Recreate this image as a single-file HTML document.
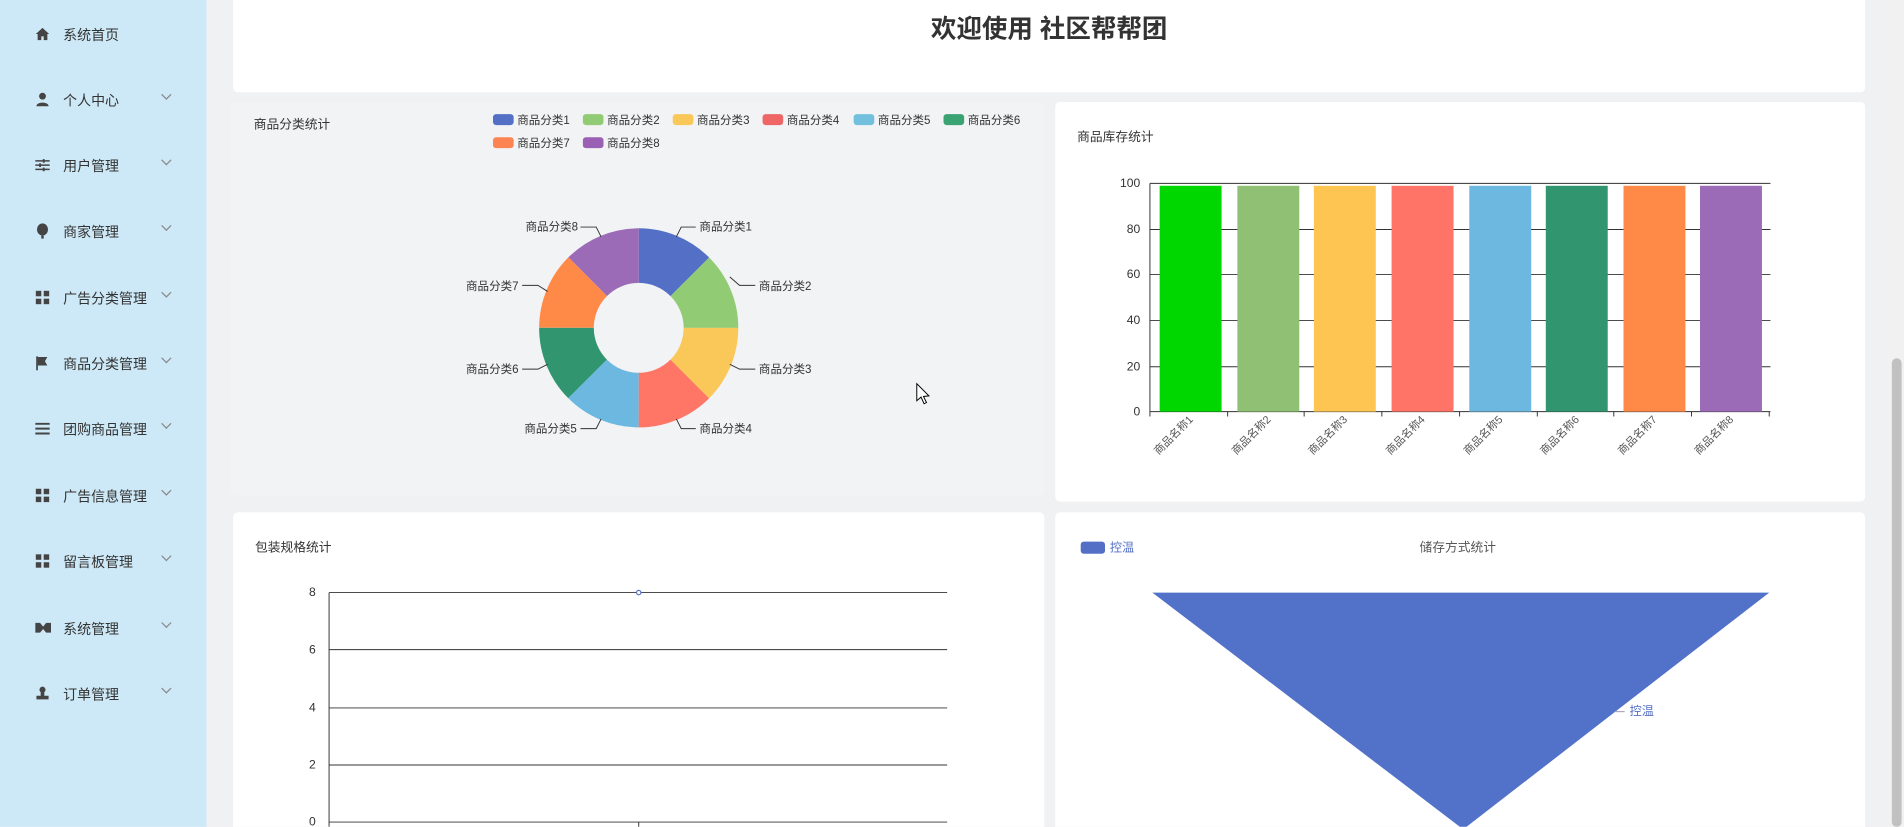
<!DOCTYPE html>
<html><head><meta charset="utf-8"><style>
*{margin:0;padding:0;box-sizing:border-box}
html,body{width:1904px;height:827px;overflow:hidden;background:#f0f1f3;font-family:"Liberation Sans","Noto Sans CJK SC",sans-serif}
#w{position:absolute;left:0;top:0;width:1568px;height:681px;overflow:hidden;transform:scale(1.21429);transform-origin:0 0;background:#f0f1f3}
.side{position:absolute;left:0;top:0;width:170px;height:681px;background:#cde8f6}
.it{position:absolute;left:0;width:170px;height:20px;font-size:11.5px;color:#333}
.it svg{position:absolute;left:29px;top:3px}
.it span{position:absolute;left:52px;top:2px}
.it i{position:absolute;left:134px;top:2px;width:6px;height:6px;border-right:1px solid #888;border-bottom:1px solid #888;transform:rotate(45deg)}
.card{position:absolute;background:#fff;border-radius:4px}
.t{position:absolute;font-size:10.5px;color:#333}
.sb{position:absolute;left:1555px;top:0;width:13px;height:681px;background:#f1f1f1}
.sb div{position:absolute;left:3px;top:295px;width:8px;height:386px;background:#c1c1c1;border-radius:4px}
svg text{font-family:"Liberation Sans","Noto Sans CJK SC",sans-serif}
</style></head><body><div id="w">
<div class="side">
<div class="it" style="top:19px"><svg width="12" height="12" viewBox="0 0 12 12"><path d="M6 1L0.5 6H2V11H5V8H7V11H10V6H11.5Z" fill="#444"/></svg><span>系统首页</span></div>
<div class="it" style="top:73px"><svg width="12" height="12" viewBox="0 0 12 12"><circle cx="6" cy="3.2" r="2.8" fill="#444"/><path d="M1 11.5C1 7.5 11 7.5 11 11.5Z" fill="#444"/></svg><span>个人中心</span><i></i></div>
<div class="it" style="top:127px"><svg width="12" height="12" viewBox="0 0 12 12"><path d="M0 2.5H12M0 6H12M0 9.5H12" stroke="#444" stroke-width="1.2"/><path d="M7 1V4M4 4.5V7.5M7 8V11" stroke="#444" stroke-width="1.6"/></svg><span>用户管理</span><i></i></div>
<div class="it" style="top:181px"><svg width="12" height="13" viewBox="0 0 12 13"><ellipse cx="6" cy="5" rx="4.5" ry="5" fill="#444"/><rect x="5" y="10" width="2" height="2.5" fill="#444"/></svg><span>商家管理</span><i></i></div>
<div class="it" style="top:236px"><svg width="12" height="12" viewBox="0 0 12 12"><rect x="0.5" y="0.5" width="4.5" height="4.5" fill="#444"/><rect x="7" y="0.5" width="4.5" height="4.5" fill="#444"/><rect x="0.5" y="7" width="4.5" height="4.5" fill="#444"/><rect x="7" y="7" width="4.5" height="4.5" fill="#444"/></svg><span>广告分类管理</span><i></i></div>
<div class="it" style="top:290px"><svg width="12" height="12" viewBox="0 0 12 12"><path d="M1.5 0.5V12" stroke="#444" stroke-width="1.4"/><path d="M2 1H10L8 4.5L10 8H2Z" fill="#444"/></svg><span>商品分类管理</span><i></i></div>
<div class="it" style="top:344px"><svg width="12" height="12" viewBox="0 0 12 12"><path d="M0 2H12M0 6H12M0 10H12" stroke="#444" stroke-width="1.6"/></svg><span>团购商品管理</span><i></i></div>
<div class="it" style="top:399px"><svg width="12" height="12" viewBox="0 0 12 12"><rect x="0.5" y="0.5" width="4.5" height="4.5" fill="#444"/><rect x="7" y="0.5" width="4.5" height="4.5" fill="#444"/><rect x="0.5" y="7" width="4.5" height="4.5" fill="#444"/><rect x="7" y="7" width="4.5" height="4.5" fill="#444"/></svg><span>广告信息管理</span><i></i></div>
<div class="it" style="top:453px"><svg width="12" height="12" viewBox="0 0 12 12"><rect x="0.5" y="0.5" width="4.5" height="4.5" fill="#444"/><rect x="7" y="0.5" width="4.5" height="4.5" fill="#444"/><rect x="0.5" y="7" width="4.5" height="4.5" fill="#444"/><rect x="7" y="7" width="4.5" height="4.5" fill="#444"/></svg><span>留言板管理</span><i></i></div>
<div class="it" style="top:508px"><svg width="13" height="12" viewBox="0 0 13 12"><path d="M0 2H4L6.5 5L9 2H13V10H9L6.5 7L4 10H0Z" fill="#444"/></svg><span>系统管理</span><i></i></div>
<div class="it" style="top:562px"><svg width="12" height="12" viewBox="0 0 12 12"><circle cx="6" cy="3" r="2.5" fill="#444"/><path d="M4.5 5H7.5V8H11V11H1V8H4.5Z" fill="#444"/></svg><span>订单管理</span><i></i></div>
</div>

<div class="card" style="left:192px;top:-4px;width:1344px;height:80px"></div>
<div style="position:absolute;left:192px;top:8px;width:1344px;text-align:center;font-size:21px;font-weight:bold;color:#333">欢迎使用 社区帮帮团</div>

<div class="card" style="left:190px;top:84px;width:670px;height:324px;background:#f2f3f5"></div>
<div class="t" style="left:209px;top:95px">商品分类统计</div>
<div class="card" style="left:869px;top:84px;width:667px;height:329px"></div>
<div class="t" style="left:887px;top:105px">商品库存统计</div>
<div class="card" style="left:192px;top:422px;width:668px;height:270px"></div>
<div class="t" style="left:210px;top:443px">包装规格统计</div>
<div class="card" style="left:869px;top:422px;width:667px;height:270px"></div>
<div class="t" style="left:1169px;top:443px;color:#555">储存方式统计</div>

<svg style="position:absolute;left:0;top:0" width="1568" height="681" viewBox="0 0 1568 681" font-size="9.5" fill="#333">
<g>
<rect x="406" y="94" width="17" height="9" rx="2.5" fill="#5470c6"/><text x="426" y="102">商品分类1</text>
<rect x="480" y="94" width="17" height="9" rx="2.5" fill="#91cc75"/><text x="500" y="102">商品分类2</text>
<rect x="554" y="94" width="17" height="9" rx="2.5" fill="#fac858"/><text x="574" y="102">商品分类3</text>
<rect x="628" y="94" width="17" height="9" rx="2.5" fill="#ee6666"/><text x="648" y="102">商品分类4</text>
<rect x="703" y="94" width="17" height="9" rx="2.5" fill="#73c0de"/><text x="723" y="102">商品分类5</text>
<rect x="777" y="94" width="17" height="9" rx="2.5" fill="#3ba272"/><text x="797" y="102">商品分类6</text>
<rect x="406" y="113" width="17" height="9" rx="2.5" fill="#fc8452"/><text x="426" y="121">商品分类7</text>
<rect x="480" y="113" width="17" height="9" rx="2.5" fill="#9a60b4"/><text x="500" y="121">商品分类8</text>
</g>
<g transform="translate(526,270) rotate(-90)" fill="none" stroke-width="45">
<circle r="59.5" stroke="#5470c6" stroke-dasharray="46.73 400" stroke-dashoffset="0"/>
<circle r="59.5" stroke="#91cc75" stroke-dasharray="46.73 400" stroke-dashoffset="-46.73"/>
<circle r="59.5" stroke="#fac858" stroke-dasharray="46.73 400" stroke-dashoffset="-93.46"/>
<circle r="59.5" stroke="#ff7566" stroke-dasharray="46.73 400" stroke-dashoffset="-140.19"/>
<circle r="59.5" stroke="#6cb8e0" stroke-dasharray="46.73 400" stroke-dashoffset="-186.92"/>
<circle r="59.5" stroke="#319570" stroke-dasharray="46.73 400" stroke-dashoffset="-233.65"/>
<circle r="59.5" stroke="#ff8a48" stroke-dasharray="46.73 400" stroke-dashoffset="-280.38"/>
<circle r="59.5" stroke="#9c6bb7" stroke-dasharray="46.73 400" stroke-dashoffset="-327.11"/>
</g>
<g stroke="#333" stroke-width="0.8" fill="none">
<path d="M557 195L561 187H573"/><path d="M601 228L609 235H622"/><path d="M601 300L609 304H622"/><path d="M557 345L561 353H573"/>
<path d="M495 345L491 353H478"/><path d="M451 300L443 304H430"/><path d="M451 240L443 235H430"/><path d="M495 195L491 187H478"/>
</g>
<text x="576" y="190">商品分类1</text><text x="625" y="239">商品分类2</text><text x="625" y="307">商品分类3</text><text x="576" y="356">商品分类4</text>
<g text-anchor="end"><text x="475" y="356">商品分类5</text><text x="427" y="307">商品分类6</text><text x="427" y="239">商品分类7</text><text x="476" y="190">商品分类8</text></g>
<g stroke="#333" stroke-width="0.8">
<path d="M947 151H1458M947 189H1458M947 226H1458M947 264H1458M947 302H1458M947 339H1458M947 151V339"/>
<path d="M947 339V343M1011 339V343M1074 339V343M1138 339V343M1202 339V343M1266 339V343M1329 339V343M1393 339V343M1457 339V343"/>
</g>
<g text-anchor="end" font-size="10"><text x="939" y="154">100</text><text x="939" y="192">80</text><text x="939" y="229">60</text><text x="939" y="267">40</text><text x="939" y="305">20</text><text x="939" y="342">0</text></g>
<rect x="955" y="153" width="51" height="186" fill="#00d600"/>
<rect x="1019" y="153" width="51" height="186" fill="#8fc073"/>
<rect x="1082" y="153" width="51" height="186" fill="#ffc552"/>
<rect x="1146" y="153" width="51" height="186" fill="#ff7466"/>
<rect x="1210" y="153" width="51" height="186" fill="#6cb8e0"/>
<rect x="1273" y="153" width="51" height="186" fill="#319570"/>
<rect x="1337" y="153" width="51" height="186" fill="#ff8a48"/>
<rect x="1400" y="153" width="51" height="186" fill="#9c6bb7"/>
<g text-anchor="end" font-size="9" fill="#555">
<text transform="translate(983,346) rotate(-45)">商品名称1</text>
<text transform="translate(1047,346) rotate(-45)">商品名称2</text>
<text transform="translate(1110,346) rotate(-45)">商品名称3</text>
<text transform="translate(1174,346) rotate(-45)">商品名称4</text>
<text transform="translate(1238,346) rotate(-45)">商品名称5</text>
<text transform="translate(1301,346) rotate(-45)">商品名称6</text>
<text transform="translate(1365,346) rotate(-45)">商品名称7</text>
<text transform="translate(1428,346) rotate(-45)">商品名称8</text>
</g>
<g stroke="#333" stroke-width="0.8"><path d="M271 488H780M271 535H780M271 583H780M271 630H780M271 677H780M271 488V681M526 677V681"/></g>
<g text-anchor="end" font-size="10"><text x="260" y="491">8</text><text x="260" y="538">6</text><text x="260" y="586">4</text><text x="260" y="633">2</text><text x="260" y="680">0</text></g>
<circle cx="526" cy="488" r="1.8" fill="#fff" stroke="#5470c6"/>
<rect x="890" y="446" width="20" height="10" rx="2.5" fill="#5470c6"/><text x="914" y="454" fill="#5470c6" font-size="10">控温</text>
<path d="M949 488H1457L1205 683Z" fill="#5271c9"/>
<path d="M1330 586H1338" stroke="#aab" stroke-width="1"/>
<text x="1342" y="589" fill="#5470c6" font-size="10">控温</text>
<path d="M755 316V330L758.5 327L761 332.5L763 331.5L760.5 326.5L765 326Z" fill="#fff" stroke="#000" stroke-width="0.8"/>
</svg>
<div class="sb"><div></div></div>
</div></body></html>
